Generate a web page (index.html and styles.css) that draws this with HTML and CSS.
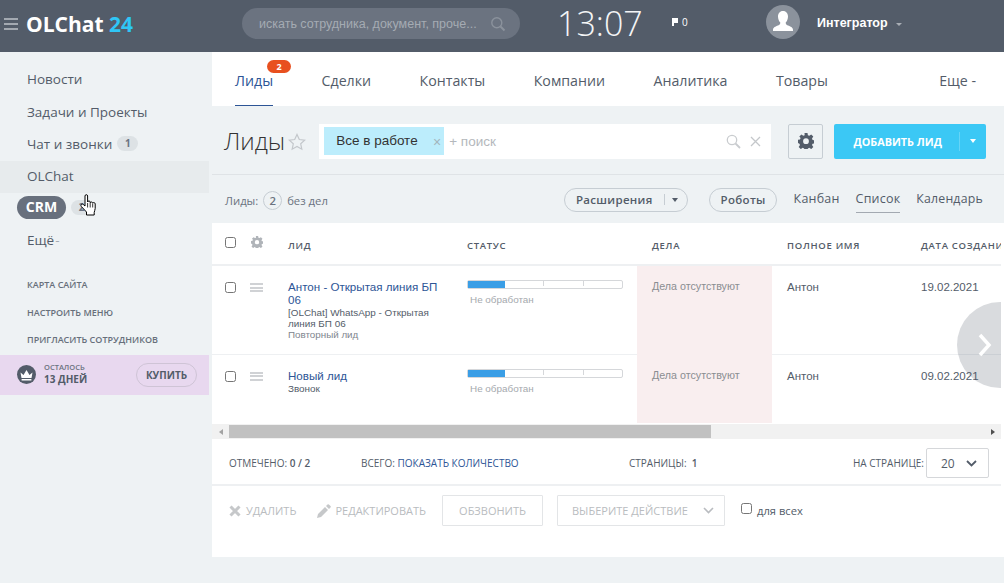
FILE: index.html
```html
<!DOCTYPE html>
<html lang="ru">
<head>
  <meta charset="UTF-8">
  <title>Лиды</title>
  <link rel="stylesheet" href="styles.css">
</head>
<body>

  <header class="topbar">
    <div class="burger"><i></i><i></i><i></i></div>
    <div class="logo">OLChat <span>24</span></div>
    <div class="search">
      <span class="search-text">искать сотрудника, документ, проче...</span>
      <svg width="16" height="16" viewBox="0 0 16 16" fill="none" stroke="#8b929c" stroke-width="1.4"><circle cx="6.8" cy="6.8" r="5"/><path d="M10.5 10.5l4 4" stroke-width="2"/></svg>
    </div>
    <div class="clock">13:07</div>
    <div class="flag">
      <svg width="6" height="8" viewBox="0 0 6 8" fill="#fff"><path d="M0 0h6v5H2v3H0z"/></svg>
      <span>0</span>
    </div>
    <div class="avatar">
      <svg width="22" height="24" viewBox="0 0 22 24" fill="#fff"><path d="M11 1c3.300 0 5 2.500 5 5.500 0 2.500-1 4.800-2.300 6 0 1.500.5 2.300 2.300 3 2.500 1 5 1.800 5 4.500v1H1v-1c0-2.700 2.500-3.500 5-4.500 1.800-.7 2.300-1.500 2.300-3C7 11.300 6 9 6 6.500 6 3.500 7.700 1 11 1z"/></svg>
    </div>
    <div class="user">Интегратор</div>
    <span class="caret caret-light"></span>
  </header>

  <div class="layout">
    <aside class="sidebar">
      <nav class="menu">
        <a class="menu-item">Новости</a>
        <a class="menu-item">Задачи и Проекты</a>
        <a class="menu-item">Чат и звонки <span class="count">1</span></a>
        <a class="menu-item menu-hover">OLChat</a>
        <a class="menu-item menu-crm"><b class="crm">CRM</b> <span class="count count-crm">2</span></a>
        <a class="menu-item">Ещё <span class="dash">-</span></a>
      </nav>
      <div class="side-links">
        <a>КАРТА САЙТА</a>
        <a>НАСТРОИТЬ МЕНЮ</a>
        <a>ПРИГЛАСИТЬ СОТРУДНИКОВ</a>
      </div>
      <div class="trial">
        <div class="crown">
          <svg width="15" height="12" viewBox="0 0 15 12" fill="#fff"><path d="M1.500 3.500l3 2.500 3-5 3 5 3-2.500-1 5.500h-10zM2.600 10h9.800v1.500H2.600z"/></svg>
        </div>
        <div class="trial-text"><small>ОСТАЛОСЬ</small><b>13 ДНЕЙ</b></div>
        <div class="buy">КУПИТЬ</div>
      </div>
    </aside>

    <main class="content">
      <div class="tabs">
        <a class="tab tab-active">Лиды<span class="tab-badge">2</span></a>
        <a class="tab">Сделки</a>
        <a class="tab">Контакты</a>
        <a class="tab">Компании</a>
        <a class="tab">Аналитика</a>
        <a class="tab">Товары</a>
        <a class="tab tab-more">Еще -</a>
      </div>

      <div class="titlebar">
        <h1>Лиды</h1>
        <svg class="star" width="18" height="18" viewBox="0 0 18 18" fill="none" stroke="#c3c7cb" stroke-width="1.200"><path d="M9 1.500l2.300 5 5.400.6-4 3.700 1.100 5.400L9 13.500l-4.800 2.700 1.100-5.400-4-3.700 5.400-.6z"/></svg>
        <div class="filter">
          <span class="filter-tag">Все в работе<i>×</i></span>
          <span class="filter-add">+ поиск</span>
          <svg class="filter-loupe" width="15" height="15" viewBox="0 0 15 15" fill="none" stroke="#c9cccf" stroke-width="1.300"><circle cx="6" cy="6" r="4.700"/><path d="M9.500 9.500l4.500 4.500" stroke-width="1.800"/></svg>
          <svg width="11" height="11" viewBox="0 0 11 11" stroke="#c4c7ca" stroke-width="1.300"><path d="M1 1l9 9M10 1l-9 9"/></svg>
        </div>
        <div class="gear-btn">
          <svg width="16" height="16" viewBox="0 0 16 16"><use href="#gear" fill="#535c69"/></svg>
        </div>
        <div class="add-btn"><span class="add-label">ДОБАВИТЬ ЛИД</span><span class="add-arrow"><i></i></span></div>
      </div>

      <div class="subbar">
        <div class="sub-left">Лиды: <span class="round">2</span> без дел</div>
        <div class="pill">Расширения<span class="pill-sep"></span><i class="pill-caret"></i></div>
        <div class="pill pill-robots">Роботы</div>
        <a class="view">Канбан</a>
        <a class="view view-active">Список</a>
        <a class="view view-last">Календарь</a>
      </div>

      <section class="panel">
        <div class="table-wrap">
          <table class="grid">
            <colgroup>
              <col class="c-check"><col class="c-gear"><col class="c-lead"><col class="c-status"><col class="c-deals"><col class="c-name"><col class="c-date">
            </colgroup>
            <thead>
              <tr>
                <th><span class="check"></span></th>
                <th><svg width="12" height="12" viewBox="0 0 16 16"><use href="#gear" fill="#b0b4b9"/></svg></th>
                <th class="h-lead">ЛИД</th>
                <th>СТАТУС</th>
                <th class="h-deals">ДЕЛА</th>
                <th class="h-name">ПОЛНОЕ ИМЯ</th>
                <th class="h-date">ДАТА СОЗДАНИЯ</th>
              </tr>
            </thead>
            <tbody>
              <tr class="row-one">
                <td><span class="check"></span></td>
                <td><span class="drag"></span></td>
                <td class="lead">
                  <a>Антон - Открытая линия БП 06</a>
                  <div class="lead-src">[OLChat] WhatsApp - Открытая линия БП 06</div>
                  <div class="lead-rep">Повторный лид</div>
                </td>
                <td>
                  <div class="progress"><i></i><i></i><i></i><i></i></div>
                  <div class="status-text">Не обработан</div>
                </td>
                <td class="deals">Дела отсутствуют</td>
                <td class="plain">Антон</td>
                <td class="plain">19.02.2021</td>
              </tr>
              <tr class="row-two">
                <td><span class="check"></span></td>
                <td><span class="drag"></span></td>
                <td class="lead">
                  <a>Новый лид</a>
                  <div class="lead-src">Звонок</div>
                </td>
                <td>
                  <div class="progress"><i></i><i></i><i></i><i></i></div>
                  <div class="status-text">Не обработан</div>
                </td>
                <td class="deals">Дела отсутствуют</td>
                <td class="plain">Антон</td>
                <td class="plain">09.02.2021</td>
              </tr>
            </tbody>
          </table>
          <div class="next-arrow">
            <svg width="14" height="24" viewBox="0 0 14 24" fill="none" stroke="#fff" stroke-width="3.500"><path d="M2 2l9 10-9 10"/></svg>
          </div>
        </div>

        <div class="scrollbar">
          <span class="sb-left"></span>
          <div class="sb-track"><div class="sb-thumb"></div></div>
          <span class="sb-right"></span>
        </div>

        <div class="summary">
          <span class="sum-checked">ОТМЕЧЕНО: <b>0 / 2</b></span>
          <span class="sum-total">ВСЕГО: <a>ПОКАЗАТЬ КОЛИЧЕСТВО</a></span>
          <span class="sum-pages">СТРАНИЦЫ: &nbsp;<b>1</b></span>
          <span class="sum-per">НА СТРАНИЦЕ:</span>
          <div class="per-select">20<svg width="11" height="7" viewBox="0 0 11 7" fill="none" stroke="#535c69" stroke-width="1.800"><path d="M1 1l4.500 4.500L10 1"/></svg></div>
        </div>

        <div class="actions">
          <span class="act act-del"><svg width="12" height="12" viewBox="0 0 12 12" stroke="#c6c8ca" stroke-width="3"><path d="M1.500 1.500l9 9M10.500 1.500l-9 9"/></svg>УДАЛИТЬ</span>
          <span class="act act-edit"><svg width="14" height="14" viewBox="0 0 14 14" fill="#c6c8ca"><path d="M0 14l1-4 7-7 3 3-7 7zM9 2l1.500-1.500a1 1 0 0 1 1.400 0l1.600 1.600a1 1 0 0 1 0 1.400L12 5z"/></svg>РЕДАКТИРОВАТЬ</span>
          <span class="act-btn act-call">ОБЗВОНИТЬ</span>
          <span class="act-btn act-choose">ВЫБЕРИТЕ ДЕЙСТВИЕ<svg width="11" height="7" viewBox="0 0 11 7" fill="none" stroke="#b9bcc0" stroke-width="1.600"><path d="M1 1l4.500 4.500L10 1"/></svg></span>
          <span class="check check-small"></span>
          <span class="for-all">для всех</span>
        </div>
      </section>
    </main>
  </div>

  <svg class="hand" width="18" height="23" viewBox="0 0 18 23">
    <path d="M5 2c0-1.800 2.600-1.800 2.600 0v6c.3-1.400 2.400-1.400 2.600 0v.8c.4-1.200 2.300-1 2.500.3.500-.9 2.500-.6 2.500.8v4.600c0 1.600-1 2.700-1 4v2.500H6.500V18L1.300 12.500c-1.300-1.700.6-3.300 2-2L5 12z" fill="#fff" stroke="#000" stroke-width="1"/>
    <path d="M7.600 9v4.500M10.200 9v4.500M12.700 9.500v4" fill="none" stroke="#000" stroke-width=".8"/>
  </svg>

  <svg class="defs" width="0" height="0">
    <symbol id="gear" viewBox="0 0 16 16">
      <path fill-rule="evenodd" d="M6.500 0h3l.4 2.200 1.400.6L13.200 1.500l2.100 2.100-1.300 1.900.6 1.400 2.200.4v3l-2.200.4-.6 1.400 1.300 1.900-2.100 2.100-1.900-1.300-1.400.6-.4 2.200h-3l-.4-2.200-1.400-.6-1.900 1.300-2.100-2.100 1.300-1.900-.6-1.400L-.2 9.800v-3l2.200-.4.600-1.400L1.300 3.600l2.100-2.100 1.900 1.300 1.400-.6zM8 5.300a2.900 2.900 0 1 0 0 5.800 2.900 2.900 0 0 0 0-5.800z"/>
    </symbol>
  </svg>

</body>
</html>
```

FILE: styles.css
```css
* {
  box-sizing: border-box;
}

html, body {
  margin: 0;
  height: 583px;
  overflow: hidden;
}

body {
  font-family: "Open Sans", sans-serif;
  background-color: #eef2f4;
  color: #535c69;
  position: relative;
}

a {
  text-decoration: none;
}

/* top bar */
.topbar {
  height: 52px;
  background-color: #535c69;
  display: flex;
  align-items: center;
  padding-left: 4px;
  color: #fff;
}

.burger {
  width: 14px;
  display: flex;
  flex-direction: column;
  gap: 3px;
  margin-bottom: 4px;
}

.burger i {
  height: 2px;
  background-color: #a3a9b1;
}

.logo {
  font-size: 21px;
  font-weight: 700;
  margin-left: 8px;
  margin-bottom: 4px;
  width: 216px;
}

.logo span {
  color: #2fc6f6;
}

.search {
  width: 278px;
  height: 31px;
  border-radius: 16px;
  background-color: #6b7380;
  display: flex;
  align-items: center;
  justify-content: space-between;
  padding: 0 14px 0 17px;
  margin-bottom: 5px;
}

.search-text {
  font-family: "Liberation Sans", sans-serif;
  font-size: 12.500px;
  color: #a5abb3;
  white-space: nowrap;
}

.clock {
  font-size: 34px;
  font-weight: 300;
  margin-left: 37px;
  width: 111px;
  line-height: 1;
  margin-bottom: 6px;
  color: #f4f5f6;
}

.flag {
  display: flex;
  align-items: center;
  gap: 4px;
  font-size: 10px;
  margin-left: 4px;
  width: 94px;
  margin-bottom: 8px;
}

.avatar {
  width: 34px;
  height: 34px;
  border-radius: 50%;
  background-color: #8b929c;
  display: flex;
  align-items: center;
  justify-content: center;
  margin-bottom: 8px;
  overflow: hidden;
}

.user {
  font-family: "Liberation Sans", sans-serif;
  font-size: 12.500px;
  font-weight: 700;
  margin-left: 17px;
  margin-bottom: 7px;
}

.caret {
  width: 0;
  height: 0;
  border-left: 3px solid transparent;
  border-right: 3px solid transparent;
  border-top: 3px solid #a9aeb5;
  margin-left: 8px;
  margin-bottom: 3px;
}

/* sidebar */
.layout {
  display: flex;
  height: 531px;
}

.sidebar {
  width: 209px;
  flex: none;
  margin-right: 3px;
}

.menu {
  padding-top: 13px;
}

.menu-item {
  display: flex;
  align-items: center;
  gap: 5px;
  height: 32px;
  padding-left: 27px;
  padding-bottom: 3px;
  font-size: 13.500px;
  color: #535c69;
}

.menu-item:first-child {
  padding-bottom: 5px;
}

.menu-hover {
  background-color: #e7ebed;
}

.menu-crm {
  padding-left: 17px;
  gap: 5px;
}

.count {
  font-size: 10px;
  font-weight: 700;
  background-color: #dde2e5;
  color: #6b7380;
  border-radius: 8px;
  min-width: 21px;
  height: 15px;
  line-height: 15px;
  text-align: center;
}

.crm {
  background-color: #68707d;
  color: #fff;
  font-size: 14px;
  border-radius: 12px;
  height: 23px;
  line-height: 22px;
  width: 49px;
  text-align: center;
}

.dash {
  color: #a3a9b1;
  margin-left: -4px;
}

.side-links {
  padding-top: 21px;
  display: flex;
  flex-direction: column;
}

.side-links a {
  font-size: 9px;
  font-weight: 600;
  color: #676f7b;
  padding-left: 27px;
  height: 27.500px;
  line-height: 13px;
}

.trial {
  height: 40px;
  margin-top: -6px;
  background-color: #e8d8ef;
  display: flex;
  align-items: center;
  padding-left: 17px;
}

.crown {
  width: 19px;
  height: 19px;
  border-radius: 50%;
  background-color: #535c69;
  display: flex;
  align-items: center;
  justify-content: center;
}

.trial-text {
  margin-left: 8px;
  width: 92px;
  display: flex;
  flex-direction: column;
}

.trial-text small {
  font-size: 7.500px;
  line-height: 9px;
  font-weight: 600;
  color: #6b7380;
}

.trial-text b {
  font-size: 10px;
  line-height: 14px;
  color: #535c69;
}

.buy {
  width: 61px;
  height: 24px;
  border: 1px solid #cfc4d6;
  border-radius: 12px;
  font-size: 10px;
  font-weight: 700;
  line-height: 22px;
  text-align: center;
}

/* main area */
.content {
  flex: 1;
  min-width: 0;
}

.tabs {
  height: 54px;
  background-color: #fff;
  display: flex;
  padding-left: 23px;
}

.tab {
  position: relative;
  font-size: 14.200px;
  line-height: 58px;
  height: 54px;
  margin-right: 48.500px;
  color: #535c69;
}

.tab-active {
  color: #2d5596;
  border-bottom: 1px solid #2d5596;
}

.tab-badge {
  position: absolute;
  top: 8px;
  left: 32px;
  width: 24px;
  height: 13px;
  border-radius: 7px;
  background-color: #e8501f;
  color: #fff;
  font-size: 9px;
  font-weight: 700;
  line-height: 13px;
  text-align: center;
}

.tab-more {
  margin-left: auto;
  margin-right: 28px;
}

.titlebar {
  height: 69px;
  display: flex;
  align-items: center;
  padding-left: 12px;
  border-bottom: 1px solid #dfe3e6;
}

.titlebar h1 {
  font-size: 24px;
  font-weight: 300;
  margin: 0;
  color: #333;
  line-height: 1;
  padding-top: 1px;
}

.star {
  margin-left: 3px;
  margin-top: 3px;
}

.filter {
  width: 452px;
  height: 35px;
  margin-left: 13px;
  margin-top: 2px;
  background-color: #fff;
  display: flex;
  align-items: center;
  padding: 0 10px 0 5px;
}

.filter-tag {
  font-family: "Liberation Sans", sans-serif;
  width: 120px;
  height: 28px;
  background-color: #bcedfc;
  color: #333;
  font-size: 13.500px;
  line-height: 28px;
  padding-left: 12px;
  position: relative;
}

.filter-tag i {
  position: absolute;
  right: 3px;
  top: 1px;
  color: #a3b5bd;
  font-style: normal;
  font-size: 14px;
}

.filter-add {
  font-family: "Liberation Sans", sans-serif;
  font-size: 13.500px;
  color: #b4b8bc;
  margin-left: 5px;
  flex: 1;
}

.filter-loupe {
  margin-right: 9px;
}

.gear-btn {
  width: 35px;
  height: 35px;
  border: 1px solid #c6cdd3;
  margin-left: 17px;
  margin-top: 2px;
  border-radius: 2px;
  display: flex;
  align-items: center;
  justify-content: center;
}

.add-btn {
  width: 152px;
  height: 35px;
  margin-left: 11px;
  margin-top: 2px;
  background-color: #3bc8f5;
  border-radius: 2px;
  display: flex;
  align-items: center;
  color: #fff;
  font-size: 10.800px;
  font-weight: 700;
}

.add-label {
  width: 126px;
  padding-left: 2px;
  text-align: center;
  border-right: 1px solid #66d4f7;
  line-height: 19px;
}

.add-arrow {
  flex: 1;
  display: flex;
  justify-content: center;
}

.add-arrow i {
  border-left: 3.500px solid transparent;
  border-right: 3.500px solid transparent;
  border-top: 4px solid #fff;
}

.subbar {
  height: 48px;
  display: flex;
  align-items: center;
  padding-left: 13px;
}

.sub-left {
  font-size: 11.300px;
  width: 339px;
  color: #6b7380;
  margin-top: 2px;
}

.round {
  display: inline-block;
  width: 19px;
  height: 19px;
  border: 1px solid #c6cdd3;
  border-radius: 50%;
  text-align: center;
  line-height: 17px;
  font-weight: 600;
  margin: 0 2px;
}

.pill {
  height: 24px;
  border: 1px solid #c6cdd3;
  border-radius: 12px;
  font-size: 11.500px;
  font-weight: 600;
  letter-spacing: 0.3px;
  line-height: 22px;
  padding: 0 9px 0 11px;
  display: flex;
  align-items: center;
  margin-bottom: -1px;
}

.pill-sep {
  width: 1px;
  height: 11px;
  background-color: #c6cdd3;
  margin: 0 7px 0 11px;
}

.pill-caret {
  border-left: 3.500px solid transparent;
  border-right: 3.500px solid transparent;
  border-top: 4px solid #535c69;
}

.pill-robots {
  margin-left: 21px;
  padding: 0 10px 0 11px;
  width: 68px;
}

.view {
  font-size: 12.500px;
  color: #535c69;
  letter-spacing: 0.2px;
  margin-left: 17px;
  line-height: 26px;
  height: 27px;
  margin-top: 1px;
}

.view-active {
  border-bottom: 1px solid #a3a9b1;
  margin-left: 16px;
}

.view-last {
  font-size: 12.300px;
  margin-left: 16px;
}

/* table */
.panel {
  background-color: #fff;
  width: 792px;
  height: 334px;
  position: relative;
}

.table-wrap {
  position: relative;
  height: 201px;
  width: 789px;
  overflow: hidden;
}

.grid {
  border-collapse: collapse;
  table-layout: fixed;
  width: 800px;
}

.c-check { width: 33px; }
.c-gear { width: 31px; }
.c-lead { width: 179px; }
.c-status { width: 182px; }
.c-deals { width: 135px; }
.c-name { width: 136px; }
.c-date { width: 104px; }

.grid th {
  height: 42px;
  font-size: 9.500px;
  font-weight: 600;
  letter-spacing: 0.7px;
  color: #535c69;
  text-align: left;
  padding: 3px 0 0 12px;
  white-space: nowrap;
  overflow: hidden;
  border-bottom: 2px solid #eef0f2;
}

.grid th:first-child,
.grid td:first-child {
  padding-left: 13px;
}

.grid th:nth-child(2) {
  padding: 0 0 0 6px;
}

.grid th.h-lead {
  padding-left: 12px;
}

.grid th.h-deals {
  padding-left: 15px;
}

.grid th.h-name {
  padding-left: 15px;
}

.grid th.h-date {
  padding-left: 13px;
}

.grid td {
  vertical-align: top;
  padding: 14px 0 0 12px;
  font-family: "Liberation Sans", sans-serif;
}

.grid td:nth-child(2) {
  padding-left: 5px;
}

.row-one td {
  height: 89px;
  border-bottom: 1px solid #eef0f2;
}

.row-two td {
  height: 69px;
}

.check {
  display: block;
  width: 11px;
  height: 11px;
  border: 1px solid #767676;
  border-radius: 2.500px;
  background-color: #fff;
}

.grid th .check {
  margin-top: -5px;
}

.grid td .check {
  margin-top: 2px;
}

.drag {
  display: block;
  width: 13px;
  height: 9px;
  margin-top: 3px;
  border-top: 2px solid #d0d2d5;
  border-bottom: 2px solid #d0d2d5;
  position: relative;
}

.drag::after {
  content: "";
  position: absolute;
  left: 0;
  right: 0;
  top: 1.500px;
  height: 2px;
  background-color: #d0d2d5;
}

.lead a {
  display: block;
  font-size: 11.600px;
  line-height: 13px;
  color: #2d5596;
  padding-right: 14px;
}

.lead-src {
  font-size: 9.900px;
  line-height: 11px;
  color: #535c69;
  margin-top: 1px;
  padding-right: 8px;
}

.lead-rep {
  font-size: 9.800px;
  line-height: 11px;
  color: #80868e;
}

.progress {
  display: flex;
  width: 156px;
  height: 9px;
  border: 1px solid #d5d7da;
  border-radius: 2px;
}

.progress i {
  flex: 1;
  height: 5px;
  border-right: 1px solid #d5d7da;
}

.progress i:first-child {
  flex: none;
  width: 37px;
  height: 7px;
  background-color: #3a9ee6;
  border: 0;
}

.progress i:last-child {
  border: 0;
}

.status-text {
  font-size: 9.900px;
  color: #a5a9ae;
  margin: 5px 0 0 3px;
}

.grid td.deals {
  background-color: #f9eeef;
  font-size: 10.700px;
  color: #8a8d91;
  padding-left: 15px;
  padding-top: 14px;
  border-bottom: 0;
}

.row-two td.deals {
  padding-top: 15px;
}

.grid td.plain {
  padding-left: 15px;
  padding-top: 15px;
  font-size: 11.500px;
  color: #535c69;
}

.grid td.plain:last-child {
  padding-left: 13px;
}

.next-arrow {
  position: absolute;
  right: -42px;
  top: 79px;
  width: 86px;
  height: 86px;
  border-radius: 50%;
  background-color: rgba(83, 92, 105, 0.22);
  display: flex;
  align-items: center;
  padding-left: 21px;
}

.scrollbar {
  height: 15px;
  background-color: #f1f1f1;
  display: flex;
  align-items: center;
  width: 789px;
}

.sb-left,
.sb-right {
  width: 17px;
  flex: none;
  display: flex;
  justify-content: center;
}

.sb-left::before {
  content: "";
  border-top: 3.500px solid transparent;
  border-bottom: 3.500px solid transparent;
  border-right: 4px solid #a3a3a3;
}

.sb-right::before {
  content: "";
  border-top: 3.500px solid transparent;
  border-bottom: 3.500px solid transparent;
  border-left: 4px solid #505050;
}

.sb-track {
  flex: 1;
  height: 13px;
}

.sb-thumb {
  width: 482px;
  height: 13px;
  background-color: #c1c1c1;
}

.summary {
  height: 47px;
  display: flex;
  align-items: center;
  font-size: 10px;
  color: #535c69;
  border-bottom: 2px solid #eef0f2;
  padding-top: 3px;
  width: 789px;
  position: relative;
}

.summary b {
  font-weight: 600;
}

.sum-checked {
  margin-left: 17px;
  width: 132px;
}

.sum-total {
  width: 268px;
}

.sum-total a {
  color: #2d5596;
}

.sum-pages {
  width: 224px;
}

.sum-per {
  width: 73px;
  white-space: nowrap;
}

.per-select {
  width: 63px;
  height: 30px;
  border: 1px solid #d5d7da;
  border-radius: 2px;
  font-size: 12px;
  display: flex;
  align-items: center;
  justify-content: space-between;
  padding: 0 11px 0 14px;
}

.actions {
  display: flex;
  align-items: center;
  height: 45px;
  padding-left: 17px;
  font-size: 11px;
  color: #b9bcc0;
  padding-top: 4px;
}

.act {
  display: flex;
  align-items: center;
  gap: 5px;
}

.act-edit {
  margin-left: 21px;
  gap: 4px;
}

.act-btn {
  height: 31px;
  border: 1px solid #e3e5e7;
  border-radius: 1px;
  line-height: 29px;
}

.act-call {
  width: 101px;
  text-align: center;
  margin-left: 16px;
}

.act-choose {
  width: 168px;
  margin-left: 14px;
  padding: 0 10px 0 14px;
  display: flex;
  align-items: center;
  justify-content: space-between;
}

.check-small {
  margin: -4px 0 0 16px;
  width: 11px;
  height: 11px;
}

.for-all {
  color: #535c69;
  font-size: 11.200px;
  margin-left: 5px;
}

.hand {
  position: absolute;
  left: 80px;
  top: 194px;
}

.defs {
  position: absolute;
}
```
